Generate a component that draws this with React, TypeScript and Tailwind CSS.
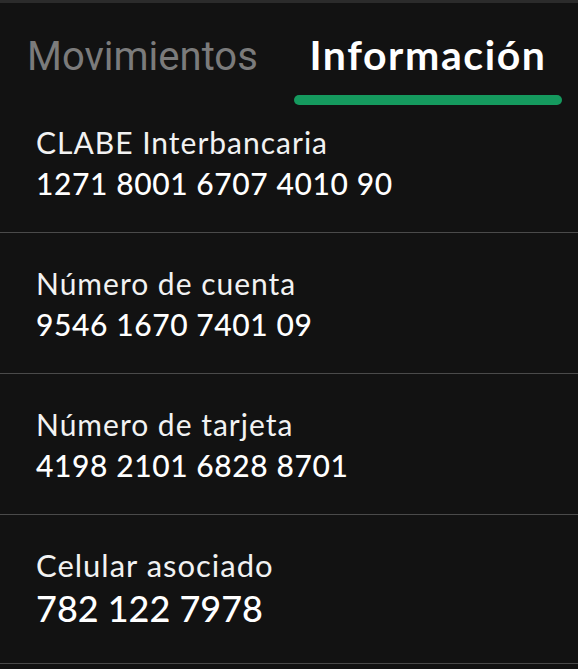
import React from 'react';

const rows = [
  { label: 'CLABE Interbancaria', value: '1271 8001 6707 4010 90' },
  { label: 'Número de cuenta', value: '9546 1670 7401 09' },
  { label: 'Número de tarjeta', value: '4198 2101 6828 8701' },
];

const InfoRow = ({ label, value, first }: { label: string; value: string; first?: boolean }) => (
  <div className={`border-b border-[#4a4a4a] px-[36px] pb-[28px] ${first ? 'pt-[17px]' : 'pt-[30px]'}`}>
    <div className="text-[30px] leading-[41px] tracking-[1px] text-[#f2f2f2]">{label}</div>
    <div className="text-[30px] leading-[41px] tracking-[0.6px] font-medium text-white">{value}</div>
  </div>
);

export default function App() {
  return (
    <div
      className="h-[669px] w-full overflow-hidden bg-[#121212]"
      style={{ fontFamily: 'Lato, "Noto Sans", sans-serif' }}
    >
      <div className="h-[3px] bg-[#2b2b2b]" />

      {/* Tabs */}
      <div className="flex h-[102px]">
        <div className="flex flex-col pl-[27px]">
          <span
            className="mt-[29px] text-[40px] leading-[50px] text-[#7b7b7b]"
            style={{ fontFamily: 'Roboto, sans-serif' }}
          >
            Movimientos
          </span>
        </div>
        <div className="ml-auto mr-[16px] flex w-[268px] flex-col items-center">
          <span className="mt-[27px] text-[41px] leading-[50px] tracking-[1.6px] font-bold text-white">
            Información
          </span>
          <div className="mt-auto h-[10px] w-full rounded-full bg-[#15995e]" />
        </div>
      </div>

      {rows.map((r, i) => (
        <InfoRow key={r.label} label={r.label} value={r.value} first={i === 0} />
      ))}

      <div className="border-b border-[#4a4a4a] px-[36px] pt-[30px] pb-[33px]">
        <div className="text-[31px] leading-[41px] tracking-[1px] text-[#f2f2f2]">Celular asociado</div>
        <div className="text-[36px] leading-[44px] font-medium text-white">782 122 7978</div>
      </div>
    </div>
  );
}
